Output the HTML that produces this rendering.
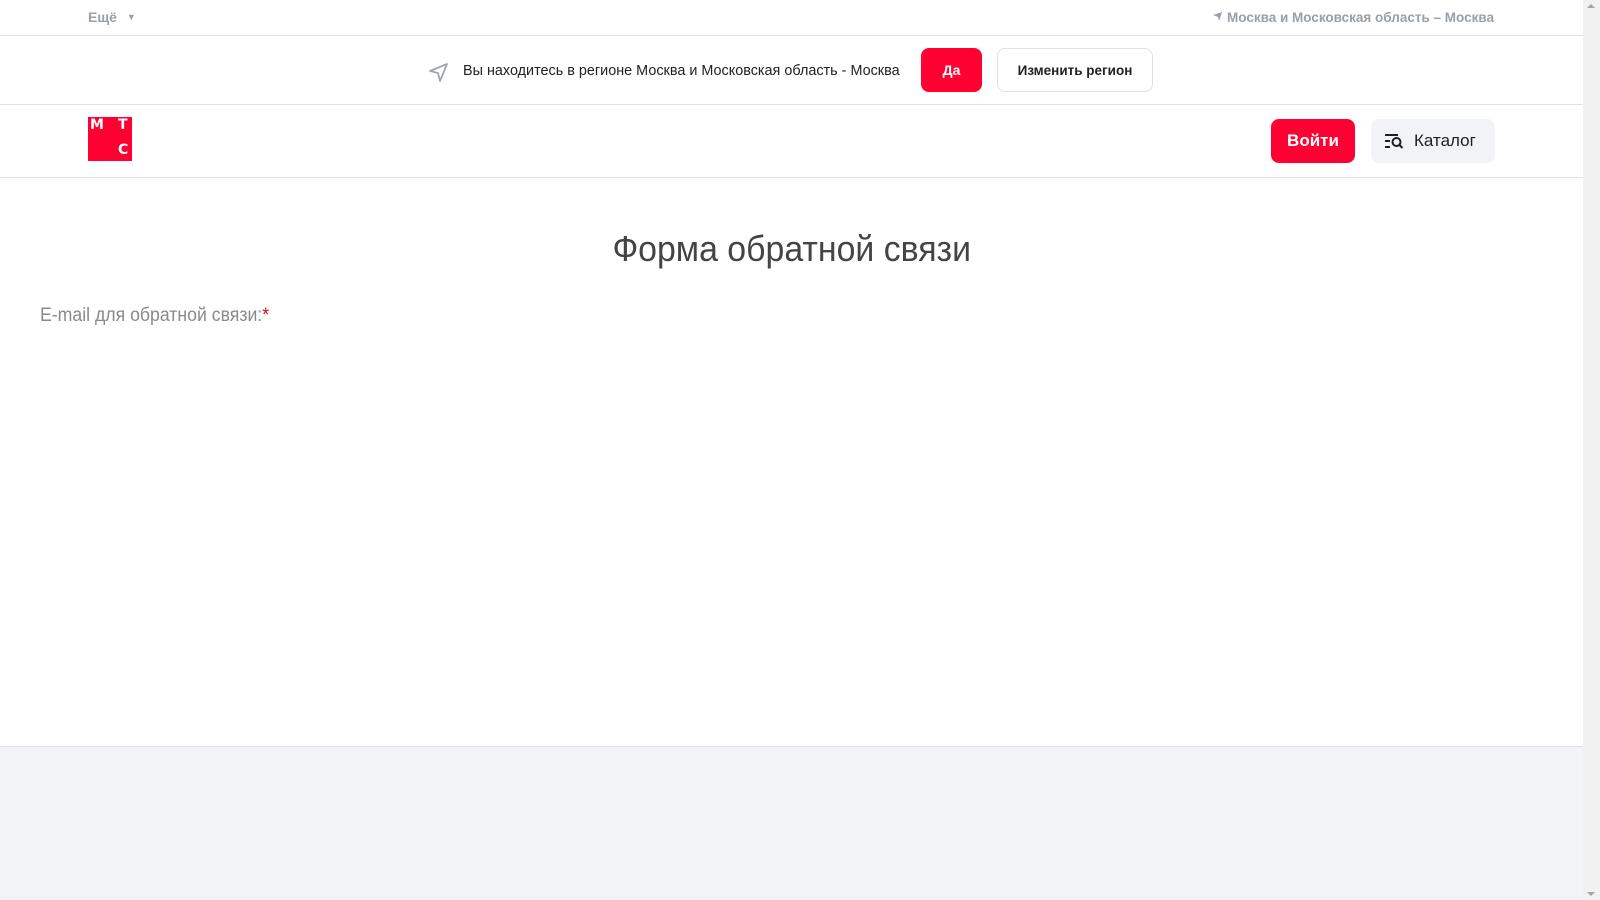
<!DOCTYPE html>
<html><head><meta charset="utf-8"><style>
*{margin:0;padding:0;box-sizing:border-box}
html,body{width:1600px;height:900px;overflow:hidden;background:#fff;font-family:"Liberation Sans",sans-serif}
.page{position:absolute;left:0;top:0;width:1583px;height:900px;background:#fff}
.sb{position:absolute;left:1583px;top:0;width:17px;height:900px;background:#f1f1f1}
.sb:before{content:"";position:absolute;left:4px;top:4px;border:4px solid transparent;border-bottom:4px solid #a3a3a3;border-top:0}
.sb:after{content:"";position:absolute;left:4px;bottom:4px;border:4px solid transparent;border-top:4px solid #a3a3a3;border-bottom:0}
.abs{position:absolute}
.line{position:absolute;left:0;width:1583px;height:1px;background:#dfe1e6}
.grey{color:#9aa0a8;font-weight:bold;font-size:14px}
.btn{position:absolute;border-radius:8px;display:flex;align-items:center;justify-content:center}
.cond{display:inline-block;transform-origin:left center;white-space:nowrap}
</style></head><body>
<div class="page">
  <div class="abs grey" style="left:88px;top:9px">Ещё <span style="font-size:9px;margin-left:6px;vertical-align:2px">▼</span></div>
  <svg class="abs" style="left:1213px;top:12px" width="10" height="10" viewBox="0 0 10 10"><path d="M0 3 L9 0 L6 9 L5 5 Z" fill="#9aa0a8"/></svg>
  <div class="abs grey" style="right:89px;top:10px;font-size:13.5px">Москва и Московская область – Москва</div>
  <div class="line" style="top:35px"></div>

  <svg class="abs" style="left:428px;top:62px" width="22" height="22" viewBox="0 0 22 22"><path d="M2 9 L19 2 L12 19 L10 11 Z" fill="none" stroke="#a0a6ae" stroke-width="1.8" stroke-linejoin="round"/></svg>
  <div class="abs" style="left:463px;top:62px;font-size:15px;color:#222"><span class="cond" style="transform:scaleX(0.96)">Вы находитесь в регионе Москва и Московская область - Москва</span></div>
  <div class="btn" style="left:921px;top:48px;width:61px;height:44px;background:#ff0032;color:#fff;font-weight:bold;font-size:14px">Да</div>
  <div class="btn" style="left:997px;top:48px;width:156px;height:44px;border:1px solid #dfe1e6;color:#222;font-weight:bold;font-size:13.5px">Изменить регион</div>
  <div class="line" style="top:104px"></div>

  <div class="abs" style="left:88px;top:117px;width:44px;height:44px;background:#ff0032;color:#fff;font-weight:900;font-size:14px;font-family:'DejaVu Sans',sans-serif">
    <span class="abs" style="left:2px;top:0px">М</span><span class="abs" style="left:30px;top:0px">Т</span><span class="abs" style="left:30px;top:25px">С</span>
  </div>
  <div class="btn" style="left:1271px;top:119px;width:84px;height:44px;background:#ff0032;color:#fff;font-weight:bold;font-size:17px">Войти</div>
  <div class="btn" style="left:1371px;top:119px;width:124px;height:44px;background:#f2f3f7;color:#1d2023;font-size:17px;justify-content:flex-start;padding-left:13px">
    <svg width="20" height="16" viewBox="0 0 20 16" style="margin-right:10px"><path d="M1 2h13M1 8h5M1 14h5" stroke="#1d2023" stroke-width="2"/><circle cx="12.5" cy="9" r="4" fill="none" stroke="#1d2023" stroke-width="2"/><path d="M15.5 12l3 3" stroke="#1d2023" stroke-width="2"/></svg>Каталог</div>
  <div class="line" style="top:177px"></div>

  <div class="abs" style="left:0;width:1583px;top:228px;text-align:center;font-size:36px;color:#444"><span style="display:inline-block;transform:scaleX(0.94)">Форма обратной связи</span></div>
  <div class="abs" style="left:40px;top:305px;font-size:19px;color:#8a8a8a"><span class="cond" style="transform:scaleX(0.93)">E-mail для обратной связи:<span style="color:#e30611">*</span></span></div>

  <div class="abs" style="left:0;top:746px;width:1583px;height:154px;background:#f2f3f7;border-top:1px solid #dfe1e6"></div>
</div>
<div class="sb"></div>
</body></html>
